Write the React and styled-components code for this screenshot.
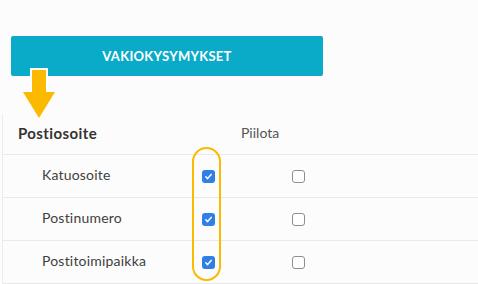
import React from "react";
import styled, { createGlobalStyle } from "styled-components";

const Global = createGlobalStyle`
  html, body { margin: 0; padding: 0; background: #fcfcfc; }
  body { font-family: Lato, "Open Sans", sans-serif; }
`;

const Page = styled.div`
  position: relative;
  width: 478px;
  height: 284px;
  overflow: hidden;
  display: flex;
  flex-direction: column;
`;

const Top = styled.div`
  display: flex;
  padding: 36px 0 0 11px;
`;

const Panel = styled.div`
  background: #ffffff;
  display: flex;
`;

const Button = styled.button`
  width: 312px;
  height: 40px;
  border: none;
  border-radius: 2px;
  background: #0aabc8;
  color: #ffffff;
  font-family: Lato, sans-serif;
  font-weight: 700;
  font-size: 13px;
  letter-spacing: 0.3px;
  padding: 0 0 1px;
`;

const Table = styled.div`
  margin: 38px 0 0 2px;
  border-left: 1px solid #ececec;
  display: flex;
  flex-direction: column;
`;

const Row = styled.div`
  display: grid;
  grid-template-columns: 187px 36px 150px 1fr;
  align-items: center;
  height: ${(p) => p.h}px;
  border-bottom: 1px solid #e9e9e9;
  box-sizing: border-box;
`;

const HeadLabel = styled.div`
  padding: 0 0 3px 15px;
  font-weight: 700;
  font-size: 15px;
  letter-spacing: 0.4px;
  color: #333;
`;

const HeadCell = styled.div`
  grid-column: 3;
  padding: 0 0 3px 15px;
  font-size: 14px;
  color: #555;
`;

const Label = styled.div`
  padding: 0 0 3px 39px;
  font-size: 14px;
  letter-spacing: 0.2px;
  color: #3f3f3f;
`;

const Cell = styled.div`
  display: flex;
  justify-content: ${(p) => (p.offset ? "flex-start" : "center")};
  padding-left: ${(p) => p.offset || 0}px;
`;

const Box = styled.span`
  width: 13px;
  height: 13px;
  box-sizing: border-box;
  border-radius: 3px;
  display: flex;
  align-items: center;
  justify-content: center;
  background: ${(p) => (p.checked ? "#2f7fe6" : "#fff")};
  border: ${(p) => (p.checked ? "none" : "1px solid #8f8f8f")};
`;

const Arrow = styled.svg`
  position: absolute;
  left: 21px;
  top: 67px;
`;

const Highlight = styled.div`
  position: absolute;
  left: 192px;
  top: 147px;
  width: 29px;
  height: 134px;
  box-sizing: border-box;
  border: 2.5px solid #fbb900;
  border-radius: 15px;
`;

const Check = ({ checked }) => (
  <Box checked={checked}>
    {checked && (
      <svg width="9" height="9" viewBox="0 0 9 9">
        <path d="M1.8 4.8 L3.6 6.6 L7.2 2.4" fill="none" stroke="#fff" strokeWidth="1.5" strokeLinecap="round" strokeLinejoin="round" />
      </svg>
    )}
  </Box>
);

const rows = ["Katuosoite", "Postinumero", "Postitoimipaikka"];

export default function App() {
  return (
    <Page>
      <Global />
      <Top>
        <Panel>
          <Button>VAKIOKYSYMYKSET</Button>
        </Panel>
      </Top>
      <Table>
        <Row h={41}>
          <HeadLabel>Postiosoite</HeadLabel>
          <HeadCell>Piilota</HeadCell>
        </Row>
        {rows.map((r) => (
          <Row h={43} key={r}>
            <Label>{r}</Label>
            <Cell>
              <Check checked />
            </Cell>
            <Cell offset={66}>
              <Check />
            </Cell>
          </Row>
        ))}
      </Table>
      <Arrow width="36" height="54" viewBox="0 0 36 54">
        <rect x="9" y="1" width="18" height="26" fill="#fff" />
        <rect x="11" y="3" width="14" height="24" fill="#fbb900" />
        <polygon points="2,25 34,25 18,51" fill="#fbb900" />
      </Arrow>
      <Highlight />
    </Page>
  );
}
